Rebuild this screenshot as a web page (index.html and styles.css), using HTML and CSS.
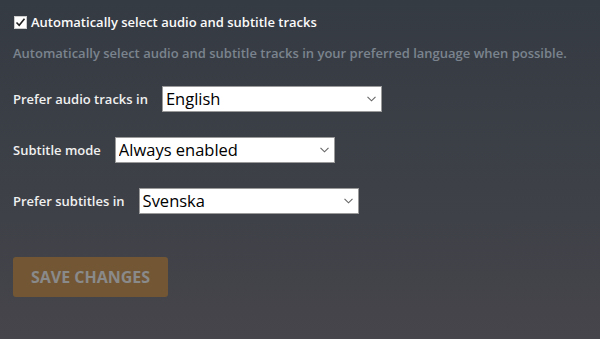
FILE: index.html
```html
<!DOCTYPE html>
<html lang="en">
<head>
    <meta charset="UTF-8">
    <meta name="viewport" content="width=device-width, initial-scale=1.0">
    <title>Playback settings</title>
    <link rel="stylesheet" href="styles.css">
</head>
<body>
    <div class="page">
        <label class="check-row">
            <span class="cbox">
                <svg width="11" height="11" viewBox="0 0 11 11"><path d="M1.5 5.5 L4.2 8.2 L9.5 1.8" fill="none" stroke="#222" stroke-width="1.6"/></svg>
            </span>
            Automatically select audio and subtitle tracks
        </label>
        <p class="desc">Automatically select audio and subtitle tracks in your preferred language when possible.</p>

        <div class="field">
            <label for="audioLang">Prefer audio tracks in</label>
            <div class="select-wrap">
                <select id="audioLang">
                    <option>English</option>
                    <option>Svenska</option>
                </select>
                <svg class="chev" width="9" height="6" viewBox="0 0 9 6"><path d="M0.5 0.8 L4.5 4.8 L8.5 0.8" fill="none" stroke="#666" stroke-width="1.1"/></svg>
            </div>
        </div>

        <div class="field">
            <label for="subMode">Subtitle mode</label>
            <div class="select-wrap">
                <select id="subMode">
                    <option>Always enabled</option>
                    <option>Disabled</option>
                </select>
                <svg class="chev" width="9" height="6" viewBox="0 0 9 6"><path d="M0.5 0.8 L4.5 4.8 L8.5 0.8" fill="none" stroke="#666" stroke-width="1.1"/></svg>
            </div>
        </div>

        <div class="field">
            <label for="subLang">Prefer subtitles in</label>
            <div class="select-wrap">
                <select id="subLang">
                    <option>Svenska</option>
                    <option>English</option>
                </select>
                <svg class="chev" width="9" height="6" viewBox="0 0 9 6"><path d="M0.5 0.8 L4.5 4.8 L8.5 0.8" fill="none" stroke="#666" stroke-width="1.1"/></svg>
            </div>
        </div>

        <button class="save" disabled>Save Changes</button>
    </div>
</body>
</html>
```

FILE: styles.css
```css
html,
body {
    height: 100%;
}

body {
    margin: 0;
    font-family: "Open Sans", "Liberation Sans", sans-serif;
    background: linear-gradient(to bottom, #353b43 0%, #3d4047 55%, #46454b 100%);
    color: #f2f2f2;
}

.page {
    padding: 14px 13px;
}

.check-row {
    display: flex;
    align-items: center;
    font-size: 13px;
    font-weight: 600;
    line-height: 16px;
    color: #fafafa;
}

.cbox {
    display: flex;
    align-items: center;
    justify-content: center;
    width: 11px;
    height: 11px;
    margin: 0 4px 0 1px;
    background: #fff;
    border: 1px solid #ccc;
}

.desc {
    margin: 14px 0 0;
    font-size: 13px;
    font-weight: 600;
    line-height: 18px;
    color: #7b848e;
}

.field {
    display: flex;
    align-items: center;
    margin-top: 25px;
}

.field:first-of-type {
    margin-top: 24px;
}

.field label {
    font-size: 13px;
    font-weight: 600;
    color: #f0f0f0;
    margin-right: 14px;
}

.select-wrap {
    position: relative;
    width: 220px;
}

.select-wrap select {
    appearance: none;
    -webkit-appearance: none;
    width: 100%;
    height: 26px;
    padding: 0 20px 0 3px;
    border: 1px solid #9a9a9a;
    border-radius: 0;
    background: #fff;
    color: #000;
    font-family: "Open Sans", "Liberation Sans", sans-serif;
    font-size: 16.5px;
    line-height: 24px;
}

.chev {
    position: absolute;
    right: 6px;
    top: 10px;
    pointer-events: none;
}

.save {
    display: block;
    margin-top: 43px;
    width: 155px;
    height: 40px;
    border: none;
    border-radius: 3px;
    background: #735735;
    color: #8a8a8a;
    font-family: "Open Sans", "Liberation Sans", sans-serif;
    font-size: 16px;
    font-weight: 700;
    text-transform: uppercase;
}
```
